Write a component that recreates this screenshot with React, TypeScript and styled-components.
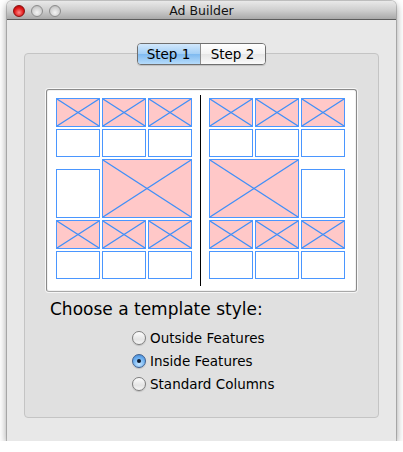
import React from "react";
import styled, { createGlobalStyle } from "styled-components";

const GlobalStyle = createGlobalStyle`
  html, body {
    margin: 0;
    padding: 0;
    background: #ffffff;
  }
  body {
    font-family: "DejaVu Sans", "Liberation Sans", sans-serif;
    color: #000;
  }
`;

const Window = styled.div`
  margin: 1px 0 0 7px;
  width: 389px;
  height: 440px;
  background: #e8e8e8;
  border-radius: 5px 5px 0 0;
  box-shadow: 0 3px 9px rgba(0, 0, 0, 0.45), 0 0 0 1px rgba(0, 0, 0, 0.18);
  display: flex;
  flex-direction: column;
  overflow: hidden;
`;

const TitleBar = styled.div`
  position: relative;
  height: 18px;
  flex: 0 0 18px;
  background: linear-gradient(#e9e9e9, #cfcfcf 50%, #a9a9a9);
  border-bottom: 1px solid #5c5c5c;
  display: flex;
  align-items: center;
  justify-content: center;
  font-size: 12.5px;
  color: #111;
`;

const Lights = styled.div`
  position: absolute;
  left: 6px;
  top: 4px;
  display: flex;
  gap: 6px;
`;

const Light = styled.span<{ $red?: boolean }>`
  width: 12px;
  height: 12px;
  border-radius: 50%;
  box-sizing: border-box;
  border: 1px solid ${({ $red }) => ($red ? "#8a1010" : "#8c8c8c")};
  background: ${({ $red }) =>
    $red
      ? "radial-gradient(circle at 50% 65%, #ff8a8a, #e01818 55%, #a00000)"
      : "radial-gradient(circle at 50% 65%, #f4f4f4, #cfcfcf 60%, #a8a8a8)"};
`;

const Body = styled.div`
  padding: 23px 17px 0;
  display: flex;
  flex-direction: column;
`;

const TabBar = styled.div`
  position: relative;
  z-index: 1;
  align-self: center;
  margin-left: -1px;
  display: flex;
  height: 22px;
  box-sizing: border-box;
  border: 1px solid #6f6f6f;
  border-radius: 4px;
  overflow: hidden;
  box-shadow: 0 1px 1px rgba(0, 0, 0, 0.15);
`;

const Tab = styled.div<{ $active?: boolean }>`
  width: ${({ $active }) => ($active ? "62px" : "64px")};
  display: flex;
  align-items: center;
  justify-content: center;
  font-size: 13.5px;
  background: ${({ $active }) =>
    $active
      ? "linear-gradient(#d2e8fc, #a2cff6 50%, #7fbaf0 51%, #b6dcfb)"
      : "linear-gradient(#ffffff, #f3f3f3 50%, #e6e6e6 51%, #fafafa)"};
  & + & {
    border-left: 1px solid #8d8d8d;
  }
`;

const TabBox = styled.div`
  margin-top: -12px;
  height: 365px;
  box-sizing: border-box;
  background: #e0e0e0;
  border: 1px solid #c4c4c4;
  border-radius: 4px;
  padding-top: 35px;
  display: flex;
  flex-direction: column;
`;

const Well = styled.div`
  align-self: center;
  width: 311px;
  height: 203px;
  box-sizing: border-box;
  border: 1px solid #8a8a8a;
  border-bottom-color: #a8a8a8;
  border-radius: 3px;
  background: #ffffff;
  box-shadow: 0 0 0 1px #f7f7f7, inset 0 0 0 1px #f2f2f2;
  padding: 5px 0 0 9px;
  display: flex;
`;

const Group = styled.div`
  margin-top: 3px;
  display: grid;
  grid-template-columns: repeat(3, 44px);
  grid-template-rows: 29px 28px 29px 28px 29px 28px;
  gap: 2px;
`;

const Divider = styled.div`
  width: 1px;
  height: 191px;
  background: #000;
  margin: 0 8px 0 8px;
`;

const Cell = styled.div<{ $pink?: boolean; $col?: string; $row?: string }>`
  position: relative;
  box-sizing: border-box;
  border: 1px solid #4a96ff;
  background: ${({ $pink }) => ($pink ? "#ffc8c8" : "#ffffff")};
  grid-column: ${({ $col }) => $col || "auto"};
  grid-row: ${({ $row }) => $row || "auto"};
`;

const TallCell = styled(Cell)`
  margin-top: 10px;
`;

const Cross = styled.svg`
  position: absolute;
  inset: 0;
  width: 100%;
  height: 100%;
`;

const Picture = ({ col, row }: { col?: string; row?: string }) => (
  <Cell $pink $col={col} $row={row}>
    <Cross viewBox="0 0 100 100" preserveAspectRatio="none">
      <line x1="0" y1="0" x2="100" y2="100" stroke="#3f8ff8" strokeWidth="1.2" vectorEffect="non-scaling-stroke" />
      <line x1="100" y1="0" x2="0" y2="100" stroke="#3f8ff8" strokeWidth="1.2" vectorEffect="non-scaling-stroke" />
    </Cross>
  </Cell>
);

const Heading = styled.div`
  margin: 6px 0 0 25px;
  font-size: 17px;
  line-height: 22px;
`;

const Options = styled.div`
  margin: 11px 0 0 107px;
  display: flex;
  flex-direction: column;
  gap: 9px;
`;

const Option = styled.label`
  display: flex;
  align-items: center;
  gap: 4px;
  font-size: 13.5px;
  line-height: 14px;
`;

const Radio = styled.span<{ $checked?: boolean }>`
  position: relative;
  width: 14px;
  height: 14px;
  box-sizing: border-box;
  border-radius: 50%;
  border: 1px solid ${({ $checked }) => ($checked ? "#3d5f8f" : "#7d7d7d")};
  background: ${({ $checked }) =>
    $checked
      ? "radial-gradient(circle at 50% 75%, #c8e6ff, #6fb1f0 55%, #3a7fd0)"
      : "linear-gradient(#fdfdfd, #e4e4e4 60%, #f6f6f6)"};
  box-shadow: 0 1px 1px rgba(0, 0, 0, 0.15);
  &::after {
    content: "";
    display: ${({ $checked }) => ($checked ? "block" : "none")};
    position: absolute;
    left: 4px;
    top: 4px;
    width: 4px;
    height: 4px;
    border-radius: 50%;
    background: #0b1a30;
  }
`;

const options = [
  { label: "Outside Features", checked: false },
  { label: "Inside Features", checked: true },
  { label: "Standard Columns", checked: false },
];

const StripCells = ({ pink }: { pink: boolean }) => (
  <>
    {[0, 1, 2].map((i) =>
      pink ? <Picture key={i} /> : <Cell key={i} />
    )}
  </>
);

export default function App() {
  return (
    <>
      <GlobalStyle />
      <Window>
        <TitleBar>
          <Lights>
            <Light $red />
            <Light />
            <Light />
          </Lights>
          Ad Builder
        </TitleBar>
        <Body>
          <TabBar>
            <Tab $active>Step 1</Tab>
            <Tab>Step 2</Tab>
          </TabBar>
          <TabBox>
            <Well>
              <Group>
                <StripCells pink />
                <StripCells pink={false} />
                <TallCell $col="1" $row="3 / span 2" />
                <Picture col="2 / span 2" row="3 / span 2" />
                <StripCells pink />
                <StripCells pink={false} />
              </Group>
              <Divider />
              <Group>
                <StripCells pink />
                <StripCells pink={false} />
                <Picture col="1 / span 2" row="3 / span 2" />
                <TallCell $col="3" $row="3 / span 2" />
                <StripCells pink />
                <StripCells pink={false} />
              </Group>
            </Well>
            <Heading>Choose a template style:</Heading>
            <Options>
              {options.map((o) => (
                <Option key={o.label}>
                  <Radio $checked={o.checked} />
                  {o.label}
                </Option>
              ))}
            </Options>
          </TabBox>
        </Body>
      </Window>
    </>
  );
}
